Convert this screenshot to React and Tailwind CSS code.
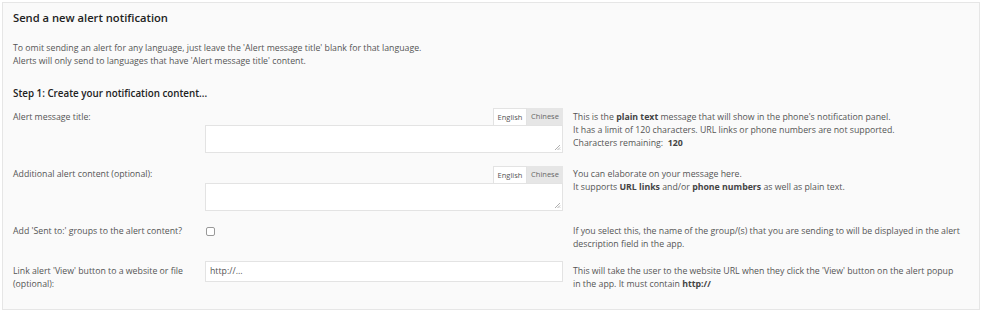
import React from 'react';

function LangTabs() {
  return (
    <div className="flex justify-end">
      <span className="h-[17px] w-[34px] flex items-center justify-center bg-white border border-b-0 border-[#e3e3e3] text-[7.5px] text-[#555]">English</span>
      <span className="h-[17px] w-[36px] flex items-center justify-center bg-[#e6e6e6] text-[7.5px] text-[#666]">Chinese</span>
    </div>
  );
}

function TextBox() {
  return (
    <div className="relative h-[28px] bg-white border border-[#e3e3e3]">
      <svg className="absolute right-[1px] bottom-[1px]" width="7" height="7" viewBox="0 0 7 7">
        <path d="M6 1L1 6M6 3.5L3.5 6M6 5.5L5.5 6" stroke="#999" strokeWidth="0.8" />
      </svg>
    </div>
  );
}

export default function App() {
  return (
    <div className="w-[983px] h-[313px] bg-white p-[2px] font-['Open_Sans',sans-serif] text-[8.75px] leading-[13px] text-[#555]">
      <div className="h-[308px] w-[978px] bg-[#fafafa] border border-[#e6e6e6] pl-[10px] pt-[7px]">
        <h1 className="text-[11.2px] font-semibold leading-[16px] text-[#222]">Send a new alert notification</h1>

        <div className="mt-[16px]">
          <p>To omit sending an alert for any language, just leave the 'Alert message title' blank for that language.</p>
          <p>Alerts will only send to languages that have 'Alert message title' content.</p>
        </div>

        <h2 className="mt-[19px] text-[9.8px] font-semibold leading-[13px] text-[#222]">Step 1: Create your notification content...</h2>

        <div className="mt-[8px] grid grid-cols-[182px_358px_1fr] gap-x-[10px]">
          <div className="pt-[3px]">Alert message title:</div>
          <div>
            <LangTabs />
            <TextBox />
          </div>
          <div className="pt-[3px]">
            <p>This is the <b className="text-[#444]">plain text</b> message that will show in the phone's notification panel.</p>
            <p>It has a limit of 120 characters. URL links or phone numbers are not supported.</p>
            <p>Characters remaining:&nbsp; <b className="text-[#444]">120</b></p>
          </div>
        </div>

        <div className="mt-[13px] grid grid-cols-[182px_358px_1fr] gap-x-[10px]">
          <div className="pt-[2px]">Additional alert content (optional):</div>
          <div>
            <LangTabs />
            <TextBox />
          </div>
          <div className="pt-[2px]">
            <p>You can elaborate on your message here.</p>
            <p>It supports <b className="text-[#444]">URL links</b> and/or <b className="text-[#444]">phone numbers</b> as well as plain text.</p>
          </div>
        </div>

        <div className="mt-[14px] grid grid-cols-[182px_358px_1fr] gap-x-[10px] pr-[16px]">
          <div>Add 'Sent to:' groups to the alert content?</div>
          <div className="pt-[2px] pl-[1px]">
            <span className="block w-[9px] h-[9px] rounded-[2px] border border-[#999] bg-white"></span>
          </div>
          <div>
            <p>If you select this, the name of the group/(s) that you are sending to will be displayed in the alert description field in the app.</p>
          </div>
        </div>

        <div className="mt-[14px] grid grid-cols-[182px_358px_1fr] gap-x-[10px] pr-[16px]">
          <div>Link alert 'View' button to a website or file (optional):</div>
          <div>
            <div className="h-[21px] -mt-[4px] bg-white border border-[#e3e3e3] flex items-center pl-[4px]">http://...</div>
          </div>
          <div>
            <p>This will take the user to the website URL when they click the 'View' button on the alert popup in the app. It must contain <b className="text-[#444]">http://</b></p>
          </div>
        </div>
      </div>
    </div>
  );
}
